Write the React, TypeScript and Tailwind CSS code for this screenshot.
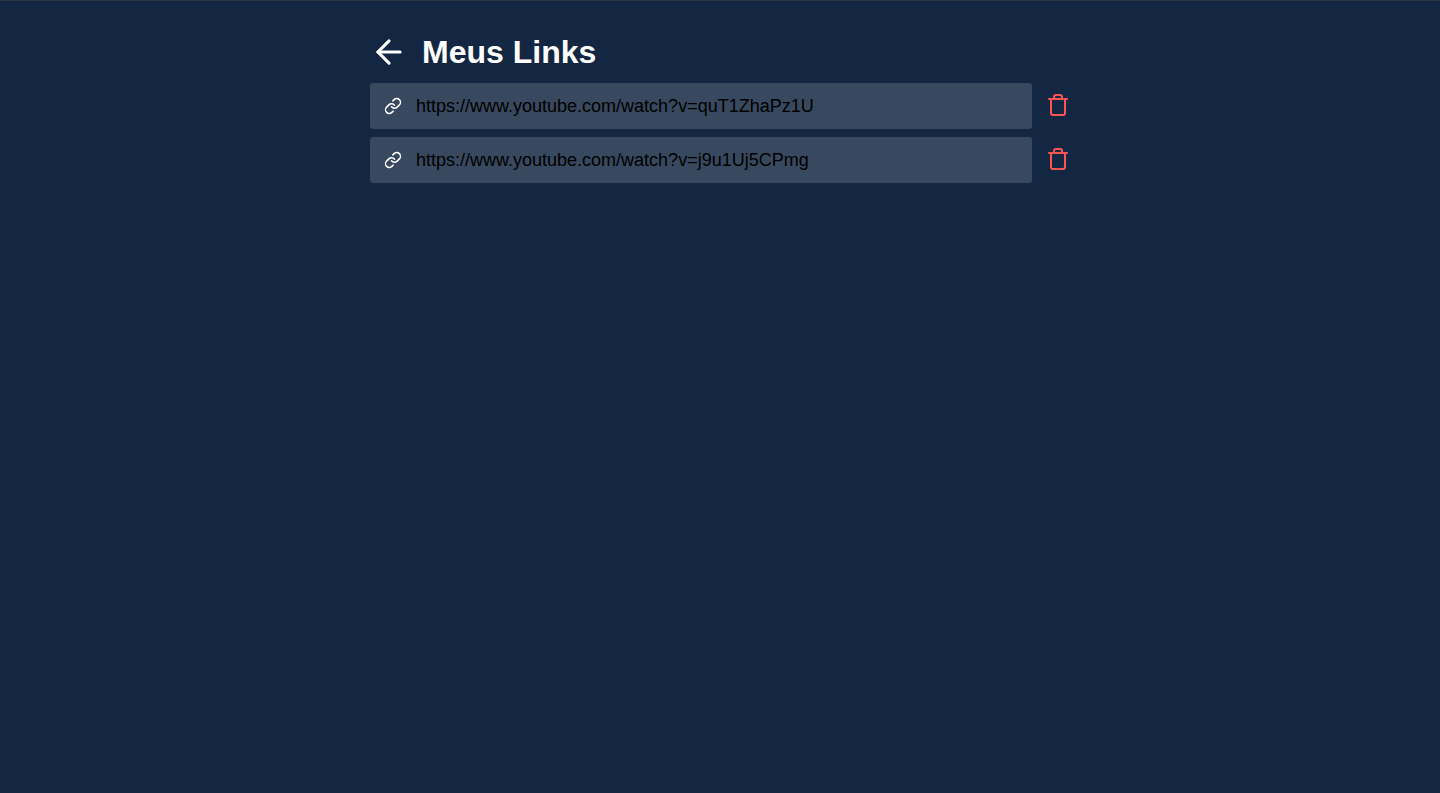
import { FiArrowLeft, FiLink, FiTrash } from "react-icons/fi";

const links = [
  "https://www.youtube.com/watch?v=quT1ZhaPz1U",
  "https://www.youtube.com/watch?v=j9u1Uj5CPmg",
];

export default function App() {
  return (
    <div className="min-h-screen border-t border-[#2b3442] bg-[#132742] px-4 pt-7 font-['Liberation_Sans',Arial,sans-serif]">
      <main className="mx-auto max-w-[700px]">
        <header className="mb-2 flex items-center gap-3.5">
          <a href="#" aria-label="Voltar" className="flex text-white">
            <FiArrowLeft size={38} />
          </a>
          <h1 className="text-[32px] leading-[46px] font-bold text-white">Meus Links</h1>
        </header>
        <ul className="flex flex-col gap-2">
          {links.map((url) => (
            <li key={url} className="flex items-center">
              <a
                href={url}
                className="flex h-[46px] min-w-0 flex-1 items-center gap-3.5 rounded-[3px] bg-[#38485e] px-3.5 text-lg text-black"
              >
                <FiLink size={18} className="shrink-0 text-white" />
                <span className="truncate">{url}</span>
              </a>
              <button type="button" aria-label="Excluir link" className="ml-3.5 flex pb-0.5 text-[#ff5454]">
                <FiTrash size={24} />
              </button>
            </li>
          ))}
        </ul>
      </main>
    </div>
  );
}
